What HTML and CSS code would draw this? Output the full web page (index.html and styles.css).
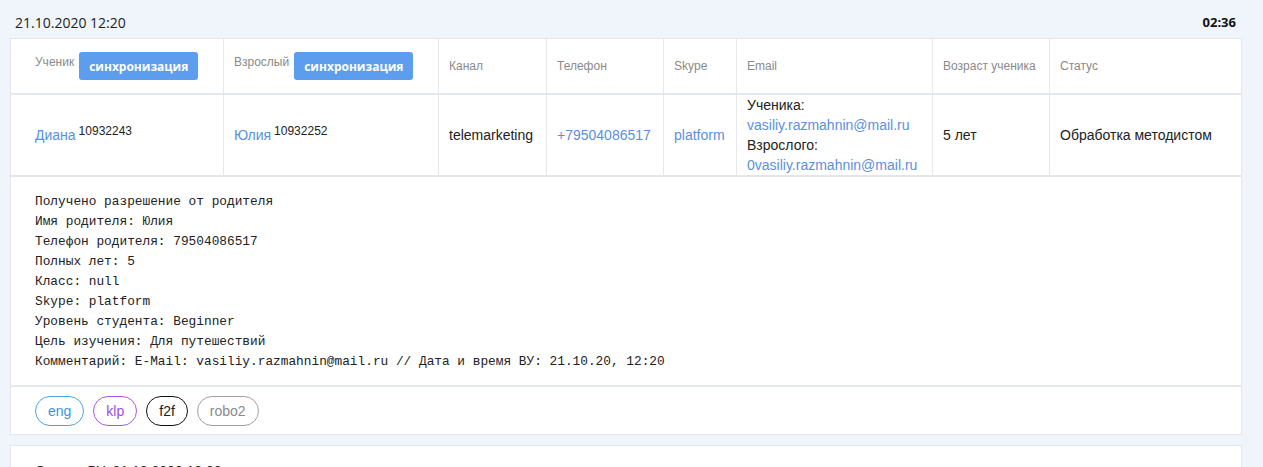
FILE: index.html
```html
<!DOCTYPE html>
<html lang="ru">
<head>
<meta charset="utf-8">
<title>Заявки</title>
<link rel="stylesheet" href="styles.css">
</head>
<body>
<div class="topbar">
  <span class="date">21.10.2020 12:20</span>
  <span class="timer">02:36</span>
</div>
<div class="card">
  <div class="row head">
    <div class="cell first"><span class="lbl">Ученик</span><button class="sync">синхронизация</button></div>
    <div class="cell"><span class="lbl">Взрослый</span><button class="sync">синхронизация</button></div>
    <div class="cell plain">Канал</div>
    <div class="cell plain">Телефон</div>
    <div class="cell plain">Skype</div>
    <div class="cell plain">Email</div>
    <div class="cell plain">Возраст ученика</div>
    <div class="cell plain last">Статус</div>
  </div>
  <div class="row body">
    <div class="cell first"><a class="link" href="#">Диана</a> <sup>10932243</sup></div>
    <div class="cell"><a class="link" href="#">Юлия</a> <sup>10932252</sup></div>
    <div class="cell">telemarketing</div>
    <div class="cell"><a class="link" href="#">+79504086517</a></div>
    <div class="cell"><a class="link" href="#">platform</a></div>
    <div class="cell email">
      <div>Ученика:</div>
      <div><a class="link" href="#">vasiliy.razmahnin@mail.ru</a></div>
      <div>Взрослого:</div>
      <div><a class="link" href="#">0vasiliy.razmahnin@mail.ru</a></div>
    </div>
    <div class="cell">5 лет</div>
    <div class="cell last">Обработка методистом</div>
  </div>
  <pre class="notes">Получено разрешение от родителя
Имя родителя: Юлия
Телефон родителя: 79504086517
Полных лет: 5
Класс: null
Skype: platform
Уровень студента: Beginner
Цель изучения: Для путешествий
Комментарий: E-Mail: vasiliy.razmahnin@mail.ru // Дата и время ВУ: 21.10.20, 12:20</pre>
  <div class="tags">
    <span class="tag eng">eng</span>
    <span class="tag klp">klp</span>
    <span class="tag f2f">f2f</span>
    <span class="tag robo">robo2</span>
  </div>
</div>
<div class="card next">
  <div class="next-title">Оценка ВУ: 21.10.2020 12:00</div>
</div>
</body>
</html>
```

FILE: styles.css
```css
* { box-sizing: border-box; }
html, body { margin: 0; }
body {
  background: #f0f5fc;
  padding: 0 21px 0 10px;
  font-family: "Liberation Sans", Arial, sans-serif;
  font-size: 14px;
  color: #222;
  overflow: hidden;
}
.topbar {
  display: flex;
  justify-content: space-between;
  align-items: center;
  height: 38px;
  padding: 6px 6px 0 5px;
  font-family: "Open Sans", "Liberation Sans", sans-serif;
  color: #222;
}
.date { font-size: 14px; }
.timer { font-size: 13px; font-weight: 700; color: #111; }
.card {
  background: #fff;
  border: 1px solid #e3e6ea;
}
.row {
  display: grid;
  grid-template-columns: 213px 215px 108px 117px 73px 196px 117px 1fr;
  border-bottom: 2px solid #e3e6ea;
}
.cell {
  border-right: 1px solid #e6e8eb;
  padding: 0 10px;
}
.cell.first { padding-left: 24px; }
.cell.last { border-right: 0; }
.head { height: 56px; }
.head .cell {
  display: flex;
  align-items: flex-start;
  padding-top: 13px;
  font-size: 12px;
  color: #8a8a8a;
}
.head .cell.plain { align-items: center; padding-top: 0; }
.lbl { line-height: 20px; margin-right: 5px; }
.sync {
  height: 28px;
  border: 0;
  border-radius: 3px;
  background: #5c9ded;
  color: #fff;
  font-family: "Open Sans", "Liberation Sans", sans-serif;
  font-weight: 700;
  font-size: 12px;
  padding: 0 10px;
}
.body { height: 82px; }
.body .cell {
  display: flex;
  align-items: center;
  line-height: 20px;
}
.body .cell sup { font-size: 12px; margin-left: 3px; position: relative; top: -4px; vertical-align: baseline; }
.body .cell.email { display: block; }
.link { color: #5b8fe2; text-decoration: none; }
.notes {
  margin: 0;
  padding: 15px 24px 13px;
  font-family: "Liberation Mono", "DejaVu Sans Mono", monospace;
  font-size: 12.8px;
  line-height: 20px;
  color: #222;
  border-bottom: 2px solid #e3e6ea;
}
.tags {
  display: flex;
  gap: 9px;
  padding: 9px 24px 8px;
}
.tag {
  height: 30px;
  line-height: 28px;
  border: 1px solid;
  border-radius: 15px;
  padding: 0 12px;
  font-size: 14px;
}
.eng { border-color: #4ba3e3; color: #3d95dc; }
.klp { border-color: #a855f0; color: #9a4fe6; }
.f2f { border-color: #111; color: #222; }
.robo { border-color: #a0a0a0; color: #8a8a8a; }
.next { margin-top: 10px; height: 60px; }
.next-title { padding: 15px 24px 0; line-height: 20px; color: #222; }
```
